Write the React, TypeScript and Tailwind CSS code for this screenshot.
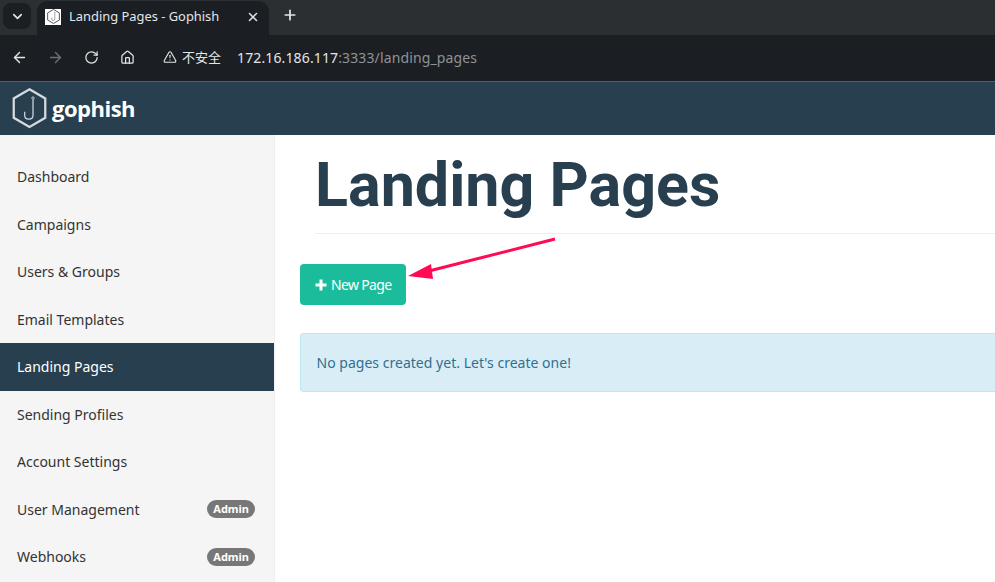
import { ArrowLeft, ArrowRight, ChevronDown, House, Plus, RotateCw, TriangleAlert, X } from "lucide-react"

const navItems = [
  { label: "Dashboard" },
  { label: "Campaigns" },
  { label: "Users & Groups" },
  { label: "Email Templates" },
  { label: "Landing Pages", active: true },
  { label: "Sending Profiles" },
  { label: "Account Settings" },
  { label: "User Management", admin: true },
  { label: "Webhooks", admin: true },
]

function HookLogo({ size, stroke }: { size: number; stroke: string }) {
  return (
    <svg width={size} height={size * 1.15} viewBox="0 0 40 46" fill="none" stroke={stroke}>
      <path d="M20 1.5 L38 12 V34 L20 44.5 L2 34 V12 Z" strokeWidth="2.6" />
      <path d="M24 13 V31 C24 37 14.5 37 14.5 31 V27" strokeWidth="1.4" />
      <circle cx="24" cy="11.5" r="1.4" strokeWidth="1" />
    </svg>
  )
}

function BrowserChrome() {
  return (
    <div className="font-['Noto_Sans',sans-serif]">
      {/* tab strip */}
      <div className="h-[35px] bg-[#2c2f32] flex items-end pl-[3px]">
        <div className="w-[28px] h-[26px] mb-[6px] mr-[6px] rounded-lg bg-[#1b1f23] flex items-center justify-center text-[#e3e5e8]">
          <ChevronDown size={15} strokeWidth={2.6} />
        </div>
        <div className="w-[232px] h-[34px] bg-[#1b1f23] rounded-t-[10px] flex items-center pb-[3px] pl-[8px] pr-[9px] text-[#e3e5e8]">
          <div className="w-4 h-4 bg-white flex items-center justify-center shrink-0">
            <HookLogo size={13} stroke="#3a3a3a" />
          </div>
          <span className="ml-[8px] text-[12.9px] grow whitespace-nowrap">Landing Pages - Gophish</span>
          <X size={14} strokeWidth={2.6} />
        </div>
        <div className="ml-[13px] mb-[7px] h-[26px] flex items-center text-[#e3e5e8]">
          <Plus size={16} strokeWidth={2.6} />
        </div>
      </div>
      {/* toolbar */}
      <div className="h-[44px] pb-[2px] bg-[#1b1f23] border-b border-[#5b5e60] box-content flex items-center pl-[11px] text-[#e3e5e8]">
        <ArrowLeft size={17} strokeWidth={2} />
        <ArrowRight size={17} strokeWidth={2} className="ml-[19px] text-[#6d7073]" />
        <RotateCw size={15} strokeWidth={2} className="ml-[20px]" />
        <House size={15} strokeWidth={2} className="ml-[21px]" />
        <TriangleAlert size={14} strokeWidth={2} className="ml-[28px]" />
        <span className="ml-[5px] text-[13px] font-['Noto_Sans_CJK_SC',sans-serif]">不安全</span>
        <span className="ml-[16px] text-[14px] tracking-[0.13px]">
          172.16.186.117<span className="text-[#8f9296]">:3333/landing_pages</span>
        </span>
      </div>
    </div>
  )
}

export default function App() {
  return (
    <div className="w-[995px] h-[582px] overflow-hidden bg-white flex flex-col font-['Noto_Sans',sans-serif]">
      <BrowserChrome />
      {/* navbar */}
      <div className="h-[53px] shrink-0 bg-[#283f50] flex items-center pl-[12px]">
        <HookLogo size={35} stroke="#d5dadd" />
        <span className="ml-[5px] text-[22px] font-bold text-white tracking-[-0.5px] font-['Open_Sans',sans-serif]">gophish</span>
      </div>
      <div className="flex grow min-h-0">
        {/* sidebar */}
        <div className="w-[275px] shrink-0 bg-[#f5f5f5] border-r border-[#eeeeee] pt-[18px]">
          {navItems.map((item) => (
            <div
              key={item.label}
              className={`h-[47.5px] flex items-center justify-between pl-[17px] pr-[19px] text-[14px] ${
                item.active ? "bg-[#283f50] text-white" : "text-[#333333]"
              }`}
            >
              <span className="-translate-y-[0.5px]">{item.label}</span>
              {item.admin && (
                <span className="h-[18px] px-[6px] rounded-full bg-[#777777] text-white text-[11px] font-bold flex items-center">
                  Admin
                </span>
              )}
            </div>
          ))}
        </div>
        {/* main */}
        <div className="grow min-w-0 pl-[25px]">
          <div className="ml-[15px] h-[99px] border-b border-[#eeeeee] font-['Roboto',sans-serif]">
            <h1 className="text-[61px] leading-[100px] font-bold text-[#283f50] whitespace-nowrap">Landing Pages</h1>
          </div>
          <button className="mt-[30px] h-[41px] w-[106px] rounded bg-[#1abc9c] text-white text-[14px] tracking-[-0.65px] flex items-center pl-[15px]">
            <svg width="12" height="12" viewBox="0 0 12 12" className="mr-[4px]" fill="#ffffff">
              <path d="M4.5 0.5 H7.5 V4.5 H11.5 V7.5 H7.5 V11.5 H4.5 V7.5 H0.5 V4.5 H4.5 Z" />
            </svg>
            New Page
          </button>
          <div className="mt-[28px] h-[59px] rounded-l border border-r-0 border-[#bce8f1] bg-[#d9edf7] flex items-center pl-[15.5px] text-[14px] tracking-[0.02px] text-[#31708f]">
            No pages created yet. Let's create one!
          </div>
        </div>
      </div>
      {/* annotation arrow */}
      <svg className="absolute left-0 top-0 pointer-events-none" width="995" height="582" fill="none">
        <path d="M555 239 L425 272" stroke="#ff0a54" strokeWidth="3" />
        <path d="M408 276 L431 264 L433 279 Z" fill="#ff0a54" />
      </svg>
    </div>
  )
}
